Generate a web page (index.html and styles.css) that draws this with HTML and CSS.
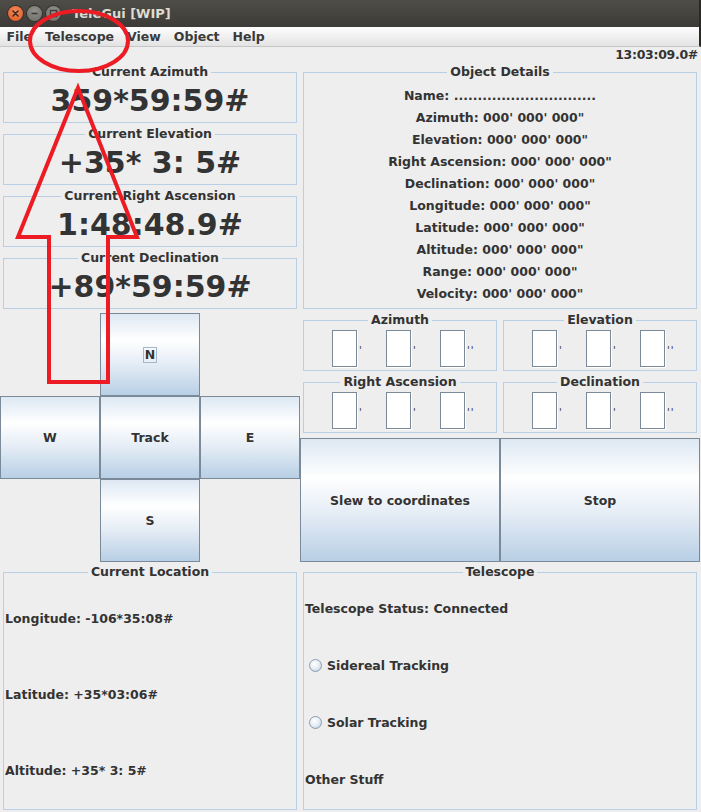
FILE: index.html
```html
<!DOCTYPE html>
<html>
<head>
<meta charset="utf-8">
<title>TeleGui [WIP]</title>
<link rel="stylesheet" href="styles.css">
</head>
<body>
<div class="window">
  <div class="titlebar">
    <span class="wbtn close"><svg viewBox="0 0 15 15" width="15" height="15"><path d="M5 5 L10 10 M10 5 L5 10" stroke="#3a2a22" stroke-width="1.6" stroke-linecap="round"/></svg></span>
    <span class="wbtn"><svg viewBox="0 0 15 15" width="15" height="15"><path d="M4.5 7.5 H10.5" stroke="#3c3b37" stroke-width="1.6"/></svg></span>
    <span class="wbtn"><svg viewBox="0 0 15 15" width="15" height="15"><rect x="4.5" y="4.5" width="6" height="6" fill="none" stroke="#3c3b37" stroke-width="1.4"/></svg></span>
    <span class="title">TeleGui [WIP]</span>
  </div>
  <div class="menubar">
    <span class="menu">File</span>
    <span class="menu">Telescope</span>
    <span class="menu">View</span>
    <span class="menu">Object</span>
    <span class="menu">Help</span>
  </div>
  <div class="clock">13:03:09.0#</div>
  <div class="main">
    <div class="readouts">
      <div class="panel"><fieldset class="tb"><legend>Current Azimuth</legend><div class="big">359*59:59#</div></fieldset></div>
      <div class="panel"><fieldset class="tb"><legend>Current Elevation</legend><div class="big">+35* 3: 5#</div></fieldset></div>
      <div class="panel"><fieldset class="tb"><legend>Current Right Ascension</legend><div class="big">1:48:48.9#</div></fieldset></div>
      <div class="panel"><fieldset class="tb"><legend>Current Declination</legend><div class="big">+89*59:59#</div></fieldset></div>
    </div>
    <div class="panel">
      <fieldset class="tb"><legend>Object Details</legend>
        <div class="details">
          <div>Name: ..............................</div>
          <div>Azimuth: 000' 000' 000"</div>
          <div>Elevation: 000' 000' 000"</div>
          <div>Right Ascension: 000' 000' 000"</div>
          <div>Declination: 000' 000' 000"</div>
          <div>Longitude: 000' 000' 000"</div>
          <div>Latitude: 000' 000' 000"</div>
          <div>Altitude: 000' 000' 000"</div>
          <div>Range: 000' 000' 000"</div>
          <div>Velocity: 000' 000' 000"</div>
        </div>
      </fieldset>
    </div>
    <div class="pad">
      <button class="btn n"><span class="focus">N</span></button>
      <button class="btn w">W</button>
      <button class="btn t">Track</button>
      <button class="btn e">E</button>
      <button class="btn s">S</button>
    </div>
    <div class="coords">
      <div class="coordrow">
        <div class="panel"><fieldset class="tb"><legend>Azimuth</legend>
          <div class="fields">
            <span class="unit"><input class="tf"><span class="tick">'</span></span>
            <span class="unit"><input class="tf"><span class="tick">'</span></span>
            <span class="unit"><input class="tf"><span class="tick">''</span></span>
          </div></fieldset></div>
        <div class="panel"><fieldset class="tb"><legend>Elevation</legend>
          <div class="fields">
            <span class="unit"><input class="tf"><span class="tick">'</span></span>
            <span class="unit"><input class="tf"><span class="tick">'</span></span>
            <span class="unit"><input class="tf"><span class="tick">''</span></span>
          </div></fieldset></div>
      </div>
      <div class="coordrow">
        <div class="panel"><fieldset class="tb"><legend>Right Ascension</legend>
          <div class="fields">
            <span class="unit"><input class="tf"><span class="tick">'</span></span>
            <span class="unit"><input class="tf"><span class="tick">'</span></span>
            <span class="unit"><input class="tf"><span class="tick">''</span></span>
          </div></fieldset></div>
        <div class="panel"><fieldset class="tb"><legend>Declination</legend>
          <div class="fields">
            <span class="unit"><input class="tf"><span class="tick">'</span></span>
            <span class="unit"><input class="tf"><span class="tick">'</span></span>
            <span class="unit"><input class="tf"><span class="tick">''</span></span>
          </div></fieldset></div>
      </div>
      <div class="actions">
        <button class="btn">Slew to coordinates</button>
        <button class="btn">Stop</button>
      </div>
    </div>
    <div class="panel">
      <fieldset class="tb"><legend>Current Location</legend>
        <div class="location">
          <div>Longitude: -106*35:08#</div>
          <div>Latitude: +35*03:06#</div>
          <div>Altitude: +35* 3: 5#</div>
        </div>
      </fieldset>
    </div>
    <div class="panel">
      <fieldset class="tb"><legend>Telescope</legend>
        <div class="scope">
          <div>Telescope Status: Connected</div>
          <div class="opt"><span class="radio"></span>Sidereal Tracking</div>
          <div class="opt"><span class="radio"></span>Solar Tracking</div>
          <div>Other Stuff</div>
        </div>
      </fieldset>
    </div>
  </div>
  <svg class="marks" width="701" height="812" viewBox="0 0 701 812">
    <ellipse cx="79" cy="41" rx="49" ry="30" fill="none" stroke="#ed1c24" stroke-width="4"/>
    <polygon points="78,88 137,237 108,237 108,382 49,382 49,237 18,237" fill="none" stroke="#ed1c24" stroke-width="4" stroke-linejoin="miter"/>
  </svg>
</div>
</body>
</html>
```

FILE: styles.css
```css
* { box-sizing: border-box; }

body {
  margin: 0;
  background: #eeeeee;
  font-family: "DejaVu Sans", sans-serif;
  font-weight: bold;
  font-size: 12.5px;
  color: #333333;
}

.window {
  position: relative;
  width: 701px;
  height: 812px;
  overflow: hidden;
  background: #eeeeee;
}

.titlebar {
  height: 27px;
  display: flex;
  align-items: center;
  gap: 4px;
  padding-left: 8px;
  background: linear-gradient(#4f4d48, #3c3b37);
  border-right: 2px solid #2a2926;
}

.wbtn {
  width: 15px;
  height: 15px;
  border-radius: 50%;
  background: radial-gradient(circle at 50% 35%, #94928c, #6b6964);
  box-shadow: 0 0 0 1px #33322e;
  display: flex;
}

.wbtn.close {
  background: radial-gradient(circle at 50% 35%, #f58a5c, #e0531e);
}

.title {
  margin-left: 7px;
  color: #dfdbd2;
  font-size: 13px;
}

.menubar {
  height: 20px;
  display: flex;
  align-items: center;
  background: linear-gradient(#fdfdfd, #e3e3e3);
  border-bottom: 1px solid #c6c6c6;
  border-right: 2px solid #2a2926;
  color: #3a3a3a;
}

.menu {
  padding: 0 6.5px;
}

.clock {
  height: 16px;
  line-height: 16px;
  text-align: right;
  padding-right: 3px;
  letter-spacing: -0.3px;
}

.main {
  display: grid;
  grid-template-columns: 300px 400px;
  grid-template-rows: 248px 252px 249px;
}

.readouts {
  display: grid;
  grid-template-rows: repeat(4, 62px);
}

.panel {
  padding: 2px 3px;
  display: flex;
  min-height: 0;
}

fieldset.tb {
  flex: 1;
  margin: 0;
  padding: 0;
  min-width: 0;
  border: 1px solid #b8cfe5;
  display: flex;
  flex-direction: column;
}

fieldset.tb > legend {
  margin: 0 auto;
  padding: 0 3px;
  line-height: 14px;
  font-size: 12.5px;
}

.big {
  flex: 1;
  display: flex;
  align-items: center;
  justify-content: center;
  font-size: 30px;
  line-height: 1;
}

.details {
  flex: 1;
  display: grid;
  grid-template-rows: repeat(10, 1fr);
  align-items: center;
  justify-items: center;
  padding: 5px 0 4px;
}

.pad {
  display: grid;
  grid-template-columns: repeat(3, 100px);
  grid-template-rows: repeat(3, 83px);
  padding-top: 2px;
}

.btn {
  font: inherit;
  color: #333333;
  margin: 0;
  padding: 0;
  border: 1px solid #7a8a99;
  background: linear-gradient(#dde8f3 0%, #ffffff 32%, #e4ecf5 62%, #b8cfe5 100%);
  display: flex;
  align-items: center;
  justify-content: center;
}

.pad .n { grid-column: 2; grid-row: 1; }
.pad .w { grid-column: 1; grid-row: 2; }
.pad .t { grid-column: 2; grid-row: 2; }
.pad .e { grid-column: 3; grid-row: 2; }
.pad .s { grid-column: 2; grid-row: 3; }

.focus {
  border: 1px solid #a3b8cc;
  line-height: 14px;
  padding: 0 0.5px;
}

.coords {
  display: flex;
  flex-direction: column;
}

.coordrow {
  display: grid;
  grid-template-columns: 200px 200px;
  height: 62px;
}

.fields {
  flex: 1;
  display: flex;
  align-items: center;
  padding-left: 28px;
}

.unit {
  display: flex;
  align-items: center;
}

.tf {
  margin: 0 1px 0 0;
  padding: 0;
  width: 25px;
  height: 37px;
  border: 1px solid #7a8a99;
  background: #ffffff;
  box-shadow: 1px 1px 0 #ffffff;
}

.tick {
  width: 28px;
  padding-left: 1px;
  padding-top: 4px;
  font-weight: normal;
  font-size: 10px;
  letter-spacing: 1px;
  line-height: 12px;
  color: #333333;
}

.actions {
  display: grid;
  grid-template-columns: 200px 200px;
  height: 124px;
  margin-top: 3px;
}

.location {
  flex: 1;
  display: grid;
  grid-template-rows: repeat(3, 1fr);
  align-items: center;
  padding: 1px;
}

.scope {
  flex: 1;
  display: grid;
  grid-template-rows: repeat(4, 1fr);
  align-items: center;
  padding: 1px;
}

.opt {
  display: flex;
  align-items: center;
}

.radio {
  width: 13px;
  height: 13px;
  border-radius: 50%;
  border: 1px solid #8c9cae;
  background: radial-gradient(circle at 40% 35%, #ffffff 0%, #e9eff6 45%, #b8cbe0 100%);
  margin: 0 5px 0 4px;
}

.marks {
  position: absolute;
  left: 0;
  top: 0;
  pointer-events: none;
}
```
